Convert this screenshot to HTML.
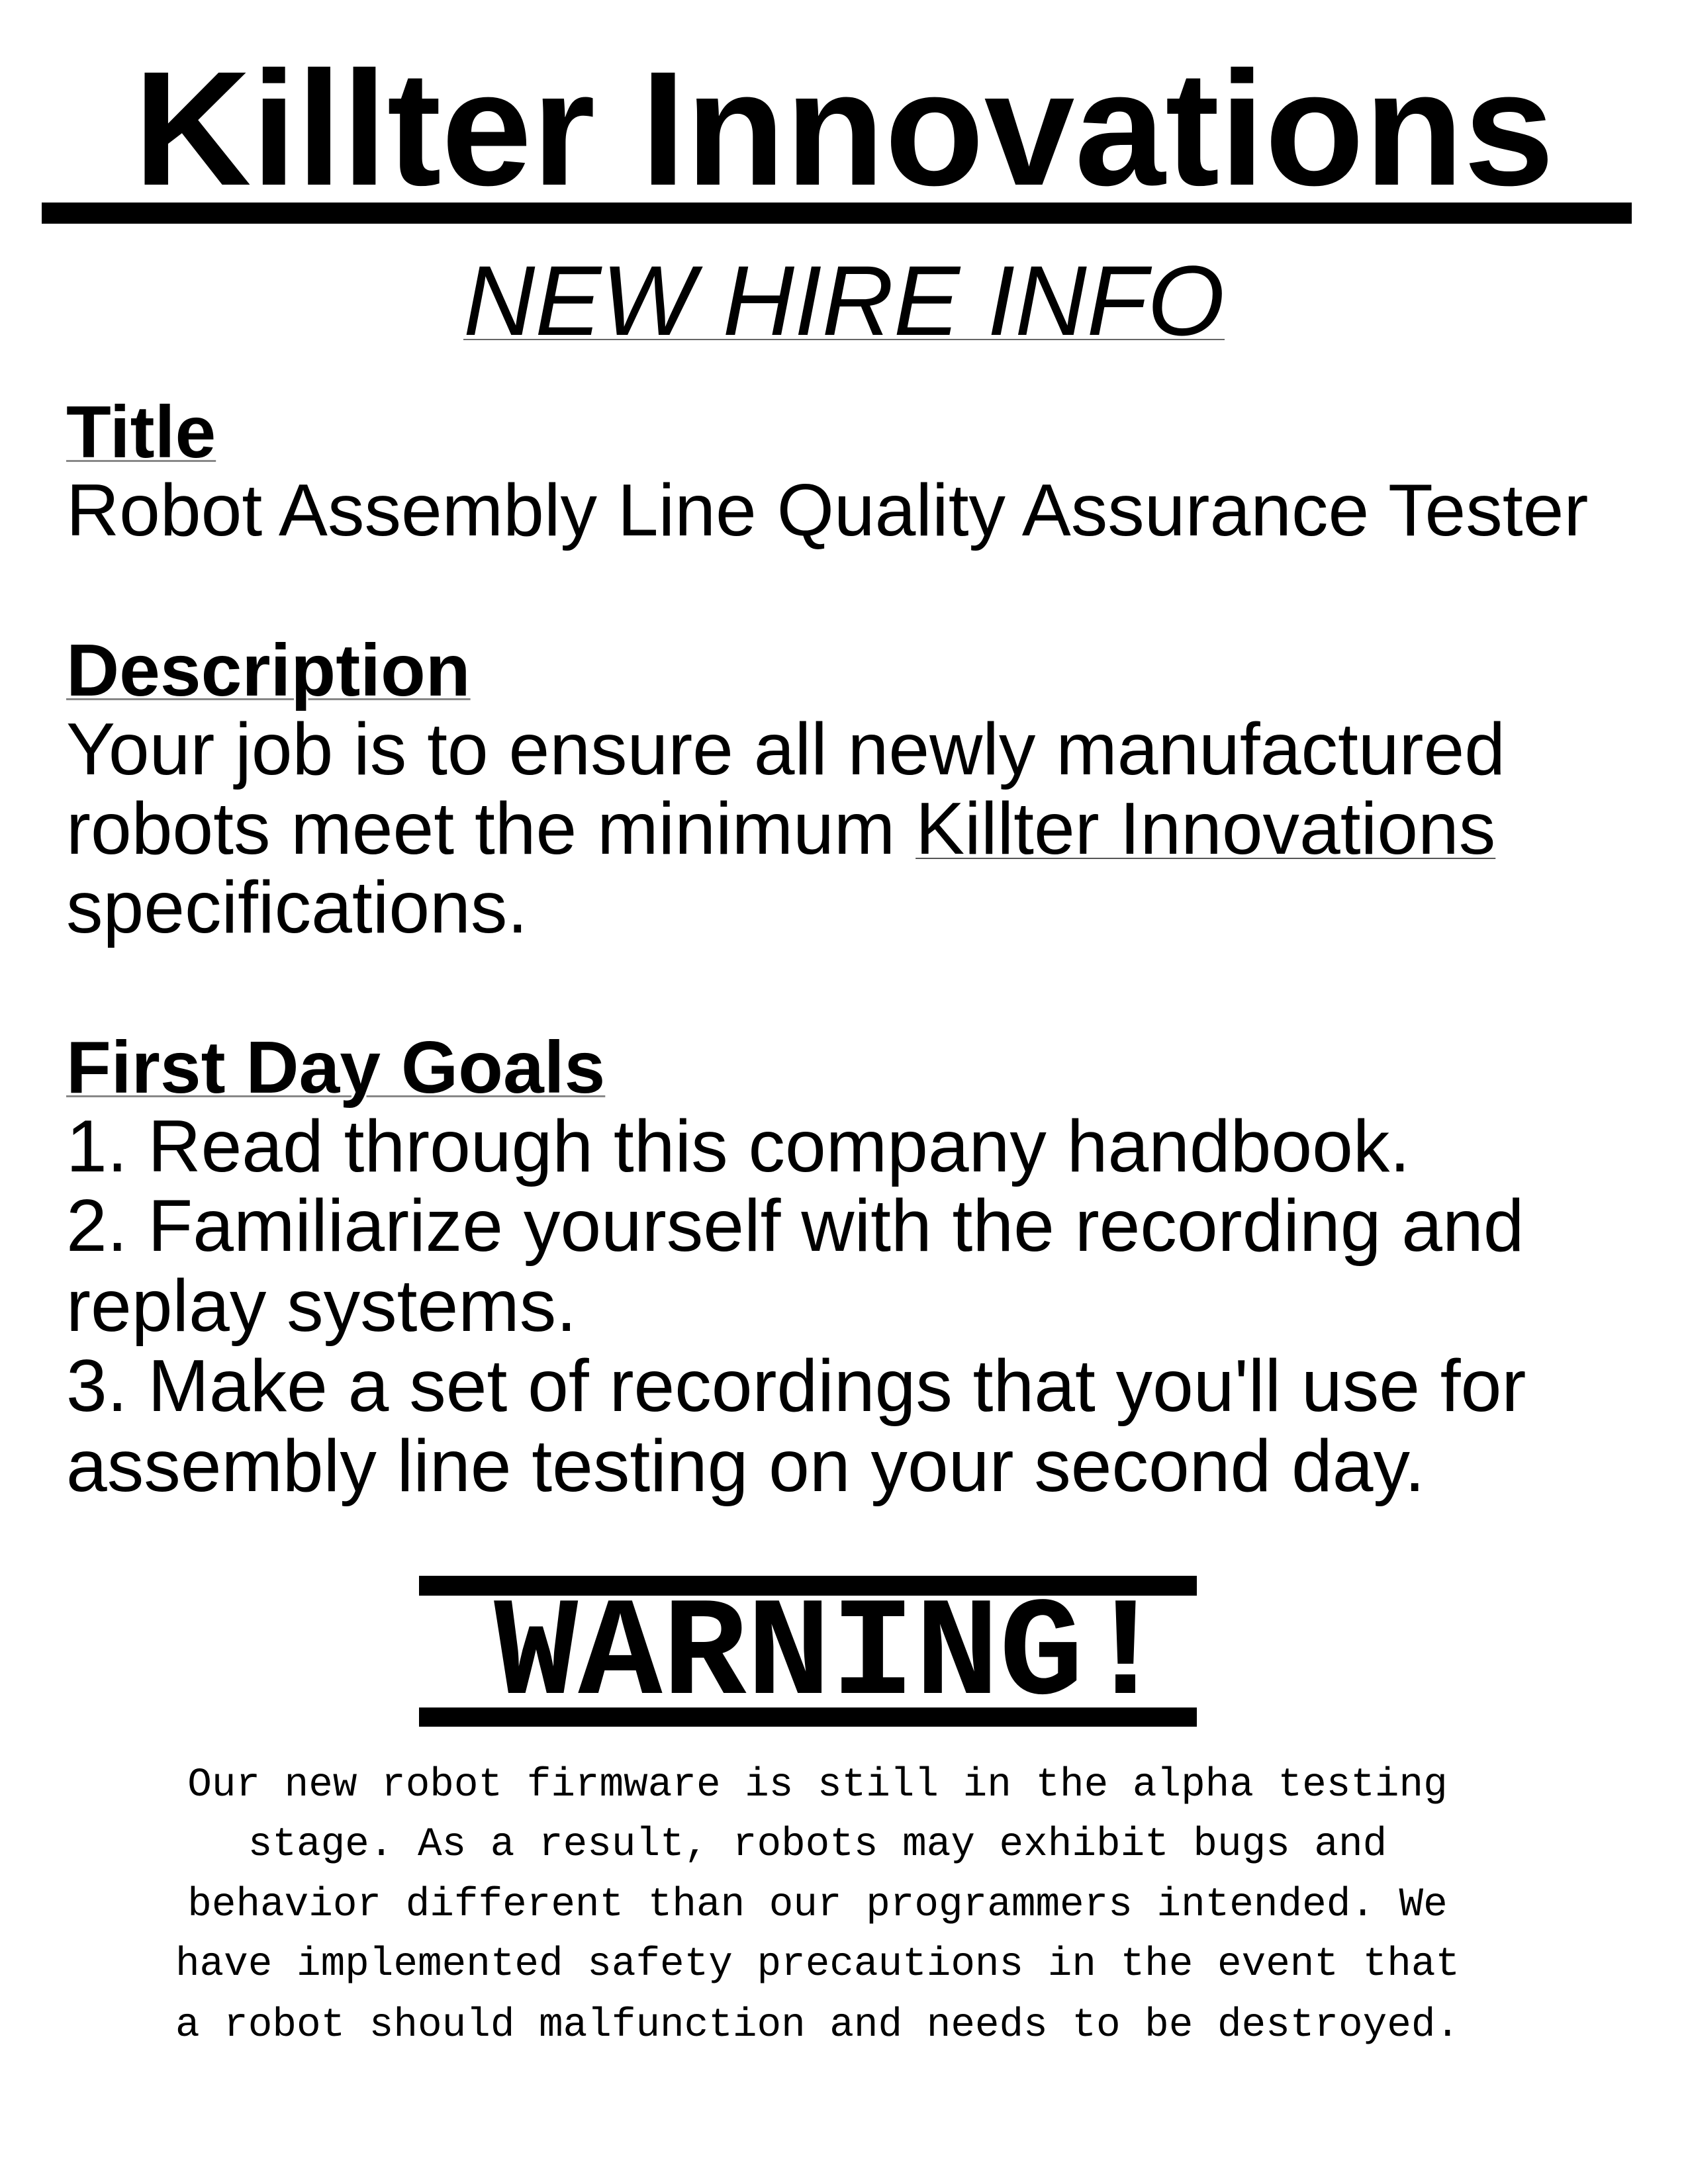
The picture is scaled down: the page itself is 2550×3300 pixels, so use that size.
<!DOCTYPE html>
<html><head><meta charset="utf-8"><style>
html,body{margin:0;padding:0;background:#fff;}
body{width:2550px;height:3300px;position:relative;overflow:hidden;color:#000;font-family:"Liberation Sans","Noto Sans CJK JP",sans-serif;}
.l{position:absolute;white-space:nowrap;line-height:1;}
.b{font-size:111px;left:100px;}
.h{font-size:111px;left:100px;font-weight:bold;text-decoration:underline;text-decoration-color:#888;text-decoration-thickness:3px;text-underline-offset:4px;}
.m{font-family:"Liberation Mono",monospace;font-size:61px;left:-40px;width:2550px;text-align:center;}
.bar{position:absolute;background:#000;}
</style></head><body>
<div class="l" style="font-size:246px;font-weight:bold;left:0;width:2550px;text-align:center;top:72px;">Killter Innovations</div>
<div class="bar" style="left:63px;top:306px;width:2402px;height:32px;"></div>
<div class="l" style="font-size:150px;font-style:italic;left:0;width:2550px;text-align:center;top:379px;"><span style="text-decoration:underline;text-decoration-thickness:2px;text-underline-offset:6px;text-decoration-color:#666;">NEW HIRE INFO</span></div>

<div class="l h" style="top:598px;">Title</div>
<div class="l b" style="top:716px;">Robot Assembly Line Quality Assurance Tester</div>

<div class="l h" style="top:958px;">Description</div>
<div class="l b" style="top:1077px;">Your job is to ensure all newly manufactured</div>
<div class="l b" style="top:1197px;">robots meet the minimum <span style="text-decoration:underline;text-decoration-thickness:2px;text-underline-offset:6px;text-decoration-color:#555;">Killter Innovations</span></div>
<div class="l b" style="top:1316px;">specifications.</div>

<div class="l h" style="top:1558px;">First Day Goals</div>
<div class="l b" style="top:1677px;">1. Read through this company handbook.</div>
<div class="l b" style="top:1797px;">2. Familiarize yourself with the recording and</div>
<div class="l b" style="top:1918px;">replay systems.</div>
<div class="l b" style="top:2039px;">3. Make a set of recordings that you'll use for</div>
<div class="l b" style="top:2160px;">assembly line testing on your second day.</div>

<div class="bar" style="left:633px;top:2381px;width:1175px;height:30px;"></div>
<div class="l" style="font-family:'Liberation Mono',monospace;font-weight:bold;font-size:212px;left:-20px;width:2550px;text-align:center;top:2396px;">WARNING!</div>
<div class="bar" style="left:633px;top:2580px;width:1175px;height:29px;"></div>

<div class="l m" style="top:2667px;">Our new robot firmware is still in the alpha testing</div>
<div class="l m" style="top:2757px;">stage. As a result, robots may exhibit bugs and</div>
<div class="l m" style="top:2848px;">behavior different than our programmers intended. We</div>
<div class="l m" style="top:2938px;">have implemented safety precautions in the event that</div>
<div class="l m" style="top:3030px;">a robot should malfunction and needs to be destroyed.</div>
</body></html>
